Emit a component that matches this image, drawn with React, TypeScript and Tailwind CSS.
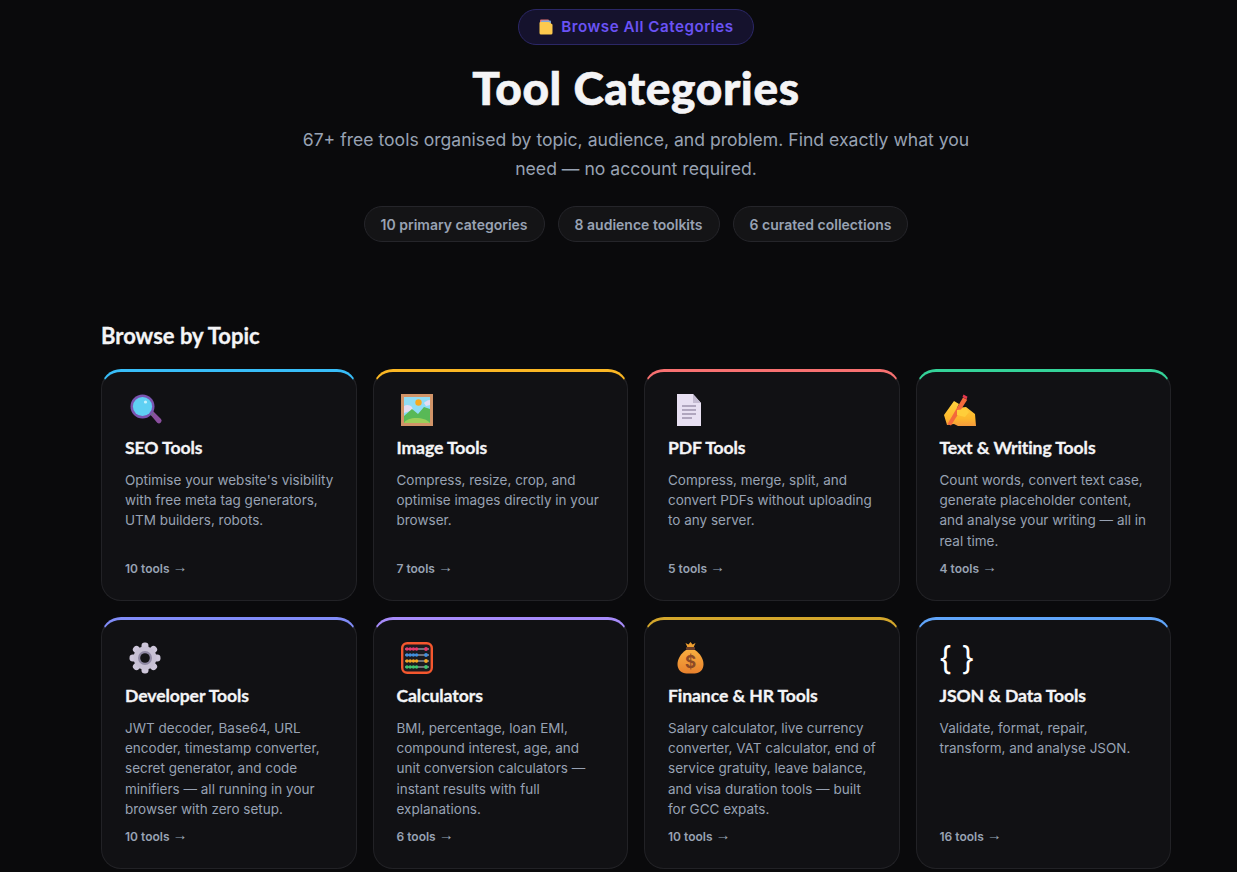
import type { ReactNode } from "react";

const FolderIcon = () => (
  <svg viewBox="0 0 16 16" className="w-4 h-4 shrink-0">
    <rect x="2" y="0.5" width="9" height="4" rx="1" fill="#e57373" />
    <rect x="3" y="1.5" width="10" height="4" rx="1" fill="#7fa7d9" />
    <path d="M1.5 4a1 1 0 0 1 1-1h8.5l3.5 2.5v8.5a1.5 1.5 0 0 1-1.5 1.5H3a1.5 1.5 0 0 1-1.5-1.5z" fill="#fdc94d" />
  </svg>
);

const SearchIcon = () => (
  <svg viewBox="0 0 34 34" className="w-[34px] h-[34px]">
    <path d="M20 20l3-3 9 9a2.6 2.6 0 0 1-.2 3.5 2.6 2.6 0 0 1-3.6.2z" fill="#8a4f9e" />
    <path d="M20 20l2-2 3 3-2 2z" fill="#6e6e85" />
    <circle cx="13.5" cy="13.5" r="12" fill="#7a55b0" />
    <circle cx="13.5" cy="13.5" r="9.6" fill="#5fd0f3" />
    <circle cx="16.5" cy="9" r="1.6" fill="#c8f1fb" />
  </svg>
);

const PictureIcon = () => (
  <svg viewBox="0 0 32 32" className="w-8 h-8">
    <rect width="32" height="32" fill="#d19468" />
    <rect x="3" y="3" width="26" height="26" fill="#8fdcf5" />
    <path d="M3 12c3-2 6-1 8 1l1 3-9 3z" fill="#e4dcf2" />
    <path d="M29 6c-3 0-5 2-6 3l2 3 4-1z" fill="#e4dcf2" />
    <path d="M3 22l8-7 6 5 6-7 6 2v14H3z" fill="#58b956" />
    <path d="M3 29c3-6 20-7 26 0z" fill="#9ccf5a" />
    <circle cx="17.5" cy="8.5" r="3.2" fill="#f8a91f" />
  </svg>
);

const DocIcon = () => (
  <svg viewBox="0 0 32 32" className="w-8 h-8">
    <path d="M5 0h16l8 9v23H5z" fill="#e8e0f2" />
    <path d="M21 0l8 9h-8z" fill="#c4bbd1" />
    <path d="M10 12h14M10 16h14M10 20h14M10 24h10" stroke="#9d93ad" strokeWidth="1.4" />
  </svg>
);

const WritingIcon = () => (
  <svg viewBox="0 0 32 32" className="w-8 h-8">
    <defs>
      <linearGradient id="hand" x1="0" y1="0" x2="0" y2="1">
        <stop offset="0" stopColor="#ffd23f" />
        <stop offset="0.7" stopColor="#fdb72c" />
        <stop offset="1" stopColor="#f59a3c" />
      </linearGradient>
    </defs>
    <path d="M0 21L10 7l5 3-2 4 9-1 9 7 1 12H14l-4-2-7 1z" fill="url(#hand)" />
    <path d="M19 3.5l4.2 2.2L7 31.5l-3.5-1.5z" fill="#f4693b" />
    <path d="M19.5 0.5l4 2.2-1 2.6-4-2.2z" fill="#e8384f" />
    <path d="M13 16l9-1 3 3-4 5-8-2z" fill="#ffce3a" />
  </svg>
);

const GearIcon = () => {
  const teeth = [0, 45, 90, 135, 180, 225, 270, 315];
  return (
    <svg viewBox="0 0 32 32" className="w-8 h-8">
      {teeth.map((a) => (
        <rect key={a} x="12.5" y="0.5" width="7" height="9" rx="3.2" fill="#cdc6da" transform={"rotate(" + a + " 16 16)"} />
      ))}
      <circle cx="16" cy="16" r="11.5" fill="#c7c0d4" />
      <circle cx="16" cy="16" r="7" fill="#8f88a3" />
      <circle cx="16" cy="16" r="4.8" fill="#141417" />
    </svg>
  );
};

const AbacusIcon = () => {
  const rows = [
    { y: 7, c: "#e8386d" },
    { y: 13, c: "#3f8fe0" },
    { y: 19, c: "#f5a623" },
    { y: 25, c: "#3ec46d" },
  ];
  return (
    <svg viewBox="0 0 32 32" className="w-8 h-8">
      <rect x="1.2" y="1.2" width="29.6" height="29.6" rx="5" fill="#1a1a1f" stroke="#f4572e" strokeWidth="2.4" />
      {rows.map((r) => (
        <g key={r.y} fill={r.c}>
          <rect x="4" y={r.y - 0.5} width="24" height="1" fill="#c8c8d0" />
          <circle cx="6" cy={r.y} r="1.7" />
          <circle cx="9.2" cy={r.y} r="1.7" />
          <circle cx="12.4" cy={r.y} r="1.7" />
          <circle cx="15.6" cy={r.y} r="1.7" />
          <circle cx="25" cy={r.y} r="1.9" />
        </g>
      ))}
    </svg>
  );
};

const MoneyBagIcon = () => (
  <svg viewBox="0 0 32 32" className="w-8 h-8">
    <defs>
      <linearGradient id="bag" x1="0" y1="0" x2="0" y2="1">
        <stop offset="0" stopColor="#f8ad3f" />
        <stop offset="1" stopColor="#e8812d" />
      </linearGradient>
    </defs>
    <path d="M13.5 1l3 1.5L18.5 0l2 2.5 3-1.5-2 4.5h-6z" fill="#f0a030" />
    <rect x="14" y="5" width="9" height="3" rx="1" fill="#6b3f2a" />
    <path d="M14 8h9c4.5 3 8.5 8.5 8.5 14 0 6-4 9.5-9 9.5h-8c-5 0-9-3.5-9-9.5C5.5 16.5 9.5 11 14 8z" fill="url(#bag)" />
    <text x="18.5" y="26" textAnchor="middle" fontSize="17" fontWeight="700" fill="#8c4a26" fontFamily="Inter, sans-serif">$</text>
  </svg>
);

type Tool = {
  title: string;
  desc: string;
  count: string;
  border: string;
  icon: ReactNode;
};

const tools: Tool[] = [
  {
    title: "SEO Tools",
    desc: "Optimise your website's visibility with free meta tag generators, UTM builders, robots.",
    count: "10 tools",
    border: "border-t-[#38bdf8]",
    icon: <SearchIcon />,
  },
  {
    title: "Image Tools",
    desc: "Compress, resize, crop, and optimise images directly in your browser.",
    count: "7 tools",
    border: "border-t-[#fbb724]",
    icon: <PictureIcon />,
  },
  {
    title: "PDF Tools",
    desc: "Compress, merge, split, and convert PDFs without uploading to any server.",
    count: "5 tools",
    border: "border-t-[#f87171]",
    icon: <DocIcon />,
  },
  {
    title: "Text & Writing Tools",
    desc: "Count words, convert text case, generate placeholder content, and analyse your writing — all in real time.",
    count: "4 tools",
    border: "border-t-[#34d399]",
    icon: <WritingIcon />,
  },
  {
    title: "Developer Tools",
    desc: "JWT decoder, Base64, URL encoder, timestamp converter, secret generator, and code minifiers — all running in your browser with zero setup.",
    count: "10 tools",
    border: "border-t-[#818cf8]",
    icon: <GearIcon />,
  },
  {
    title: "Calculators",
    desc: "BMI, percentage, loan EMI, compound interest, age, and unit conversion calculators — instant results with full explanations.",
    count: "6 tools",
    border: "border-t-[#a78bfa]",
    icon: <AbacusIcon />,
  },
  {
    title: "Finance & HR Tools",
    desc: "Salary calculator, live currency converter, VAT calculator, end of service gratuity, leave balance, and visa duration tools — built for GCC expats.",
    count: "10 tools",
    border: "border-t-[#d4a72c]",
    icon: <MoneyBagIcon />,
  },
  {
    title: "JSON & Data Tools",
    desc: "Validate, format, repair, transform, and analyse JSON.",
    count: "16 tools",
    border: "border-t-[#60a5fa]",
    icon: <span className="-ml-[5px] pt-[2px] text-[32px] leading-8 text-white font-['Inter']">{"{ }"}</span>,
  },
];

const Card = ({ tool }: { tool: Tool }) => (
  <div className={"flex flex-col rounded-[20px] border border-[#222226] border-t-[3px] bg-[#111114] pl-[23px] pr-[21px] pt-[22px] pb-[22.4px] " + tool.border}>
    <div className="h-8 pl-[4px] flex items-center">{tool.icon}</div>
    <h3 className="mt-[9px] text-[17.6px] leading-[26px] font-bold text-[#f4f4f6] font-['Lato'] tracking-[-0.1px] [-webkit-text-stroke:0.3px_#f4f4f6]">{tool.title}</h3>
    <p className="mt-[9px] mb-[6px] text-[13.5px] leading-[20.2px] text-[#98a2b3]">{tool.desc}</p>
    <div className="mt-auto flex items-center gap-[3px] text-[12px] leading-[18px] font-semibold text-[#98a2b3]">
      {tool.count}
      <span className="-mt-[4px] font-['Liberation_Sans'] font-normal text-[15px]">→</span>
    </div>
  </div>
);

export default function App() {
  return (
    <div className="h-[872px] overflow-hidden bg-[#0a0a0c] font-['Inter',sans-serif]">
      <div className="ml-[101px] w-[1070px]">
        <header className="flex flex-col items-center pt-[9px]">
          <div className="flex h-[36px] items-center gap-[7px] rounded-full border border-[#2b2766] bg-[#15122d] px-[19px] text-[15.2px] tracking-[0.5px] font-semibold text-[#6a52f5]">
            <FolderIcon />
            <span>Browse All Categories</span>
          </div>
          <h1 className="mt-[14px] text-[46px] leading-[58px] font-black text-[#f4f4f6] font-['Lato'] tracking-[0.6px] [-webkit-text-stroke:0.6px_#f4f4f6]">Tool Categories</h1>
          <p className="mt-[8px] w-[700px] text-center text-[17.6px] leading-[29px] text-[#98a2b3]">
            67+ free tools organised by topic, audience, and problem. Find exactly what you need — no account required.
          </p>
          <div className="mt-[23px] flex gap-[13px]">
            {["10 primary categories", "8 audience toolkits", "6 curated collections"].map((chip) => (
              <span key={chip} className="flex h-[36px] items-center rounded-full border border-[#25252a] bg-[#141416] px-4 text-[14px] font-semibold text-[#98a2b3]">
                {chip}
              </span>
            ))}
          </div>
        </header>

        <section className="mt-[79px]">
          <h2 className="text-[22px] leading-[30px] font-bold text-[#f4f4f6] font-['Lato'] [-webkit-text-stroke:0.3px_#f4f4f6]">Browse by Topic</h2>
          <div className="mt-[18px] grid grid-cols-4 grid-rows-[232px_252px] gap-4">
            {tools.map((t) => (
              <Card key={t.title} tool={t} />
            ))}
          </div>
        </section>
      </div>
    </div>
  );
}
